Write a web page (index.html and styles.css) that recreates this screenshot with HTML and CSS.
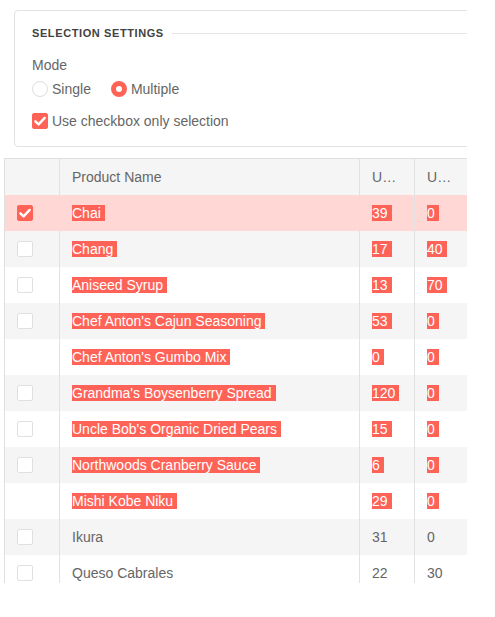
FILE: index.html
```html
<!DOCTYPE html>
<html>
<head>
<meta charset="utf-8">
<link rel="stylesheet" href="styles.css">
</head>
<body>
<div class="clip">
  <div class="settings">
    <div class="legend"><span class="legend-text">Selection Settings</span><span class="legend-line"></span></div>
    <div class="label">Mode</div>
    <div class="radios">
      <label class="opt"><span class="radio"></span>Single</label>
      <label class="opt"><span class="radio on"></span>Multiple</label>
    </div>
    <label class="opt check-row"><span class="cb on"><svg viewBox="0 0 16 16" width="16" height="16"><path d="M3.4 8.3 L6.6 11.4 L12.7 4.9" fill="none" stroke="#fff" stroke-width="2.4" stroke-linecap="round" stroke-linejoin="round"/></svg></span>Use checkbox only selection</label>
  </div>

  <div class="grid">
    <div class="row head">
      <div class="cell c1"></div>
      <div class="cell">Product Name</div>
      <div class="cell">Units In Stock</div>
      <div class="cell last">Units On Order</div>
    </div>
    <div class="row sel">
      <div class="cell c1"><span class="cb on"><svg viewBox="0 0 16 16" width="16" height="16"><path d="M3.4 8.3 L6.6 11.4 L12.7 4.9" fill="none" stroke="#fff" stroke-width="2.4" stroke-linecap="round" stroke-linejoin="round"/></svg></span></div>
      <div class="cell"><span class="hl">Chai</span></div>
      <div class="cell"><span class="hl">39</span></div>
      <div class="cell last"><span class="hl">0</span></div>
    </div>
    <div class="row alt">
      <div class="cell c1"><span class="cb"></span></div>
      <div class="cell"><span class="hl">Chang</span></div>
      <div class="cell"><span class="hl">17</span></div>
      <div class="cell last"><span class="hl">40</span></div>
    </div>
    <div class="row">
      <div class="cell c1"><span class="cb"></span></div>
      <div class="cell"><span class="hl">Aniseed Syrup</span></div>
      <div class="cell"><span class="hl">13</span></div>
      <div class="cell last"><span class="hl">70</span></div>
    </div>
    <div class="row alt">
      <div class="cell c1"><span class="cb"></span></div>
      <div class="cell"><span class="hl">Chef Anton's Cajun Seasoning</span></div>
      <div class="cell"><span class="hl">53</span></div>
      <div class="cell last"><span class="hl">0</span></div>
    </div>
    <div class="row">
      <div class="cell c1"></div>
      <div class="cell"><span class="hl">Chef Anton's Gumbo Mix</span></div>
      <div class="cell"><span class="hl">0</span></div>
      <div class="cell last"><span class="hl">0</span></div>
    </div>
    <div class="row alt">
      <div class="cell c1"><span class="cb"></span></div>
      <div class="cell"><span class="hl">Grandma's Boysenberry Spread</span></div>
      <div class="cell"><span class="hl">120</span></div>
      <div class="cell last"><span class="hl">0</span></div>
    </div>
    <div class="row">
      <div class="cell c1"><span class="cb"></span></div>
      <div class="cell"><span class="hl">Uncle Bob's Organic Dried Pears</span></div>
      <div class="cell"><span class="hl">15</span></div>
      <div class="cell last"><span class="hl">0</span></div>
    </div>
    <div class="row alt">
      <div class="cell c1"><span class="cb"></span></div>
      <div class="cell"><span class="hl">Northwoods Cranberry Sauce</span></div>
      <div class="cell"><span class="hl">6</span></div>
      <div class="cell last"><span class="hl">0</span></div>
    </div>
    <div class="row">
      <div class="cell c1"></div>
      <div class="cell"><span class="hl">Mishi Kobe Niku</span></div>
      <div class="cell"><span class="hl">29</span></div>
      <div class="cell last"><span class="hl">0</span></div>
    </div>
    <div class="row alt">
      <div class="cell c1"><span class="cb"></span></div>
      <div class="cell">Ikura</div>
      <div class="cell">31</div>
      <div class="cell last">0</div>
    </div>
    <div class="row">
      <div class="cell c1"><span class="cb"></span></div>
      <div class="cell">Queso Cabrales</div>
      <div class="cell">22</div>
      <div class="cell last">30</div>
    </div>
  </div>
</div>
</body>
</html>
```

FILE: styles.css
```css
html, body {
  margin: 0;
  padding: 0;
  background: #ffffff;
}
body {
  font-family: "Liberation Sans", Arial, sans-serif;
  font-size: 14px;
  color: #666666;
  padding-top: 10px;
}
.clip {
  width: 463px;
  margin-left: 4px;
  overflow: hidden;
}
.settings {
  margin-left: 10px;
  width: 480px;
  border: 1px solid #e2e2e2;
  border-radius: 4px;
  padding: 14px 17px 15px 17px;
  box-sizing: border-box;
}
.legend {
  display: flex;
  align-items: center;
  gap: 8px;
  height: 16px;
}
.legend-text {
  font-size: 11px;
  font-weight: bold;
  text-transform: uppercase;
  letter-spacing: 0.6px;
  color: #424242;
  white-space: nowrap;
}
.legend-line {
  flex: 1;
  height: 1px;
  background: #e6e6e6;
}
.label {
  margin-top: 14px;
  line-height: 20px;
}
.radios {
  margin-top: 4px;
  display: flex;
  gap: 20px;
  height: 20px;
}
.opt {
  display: flex;
  align-items: center;
  gap: 4px;
  line-height: 20px;
  height: 20px;
}
.check-row {
  margin-top: 12px;
}
.radio {
  width: 16px;
  height: 16px;
  box-sizing: border-box;
  border: 1px solid #dedede;
  border-radius: 50%;
  background: #fff;
}
.radio.on {
  border: 5px solid #ff6358;
}
.cb {
  display: block;
  width: 16px;
  height: 16px;
  box-sizing: border-box;
  border: 1px solid #e0e0e0;
  border-radius: 2px;
  background: #fff;
}
.cb svg {
  display: block;
  margin: -1px;
}
.cb.on {
  background: #ff6358;
  border-color: #ff6358;
}
.grid {
  margin-top: 11px;
  height: 425px;
  box-sizing: border-box;
  border-top: 1px solid #e0e0e0;
  border-left: 1px solid #e0e0e0;
  overflow: hidden;
}
.row {
  display: grid;
  grid-template-columns: 55px 300px 55px 52px;
  height: 36px;
  background: #ffffff;
}
.row.head, .row.alt {
  background: #f5f5f5;
}
.row.sel {
  background: #ffd8d5;
}
.cell {
  box-sizing: border-box;
  border-right: 1px solid #e2e2e2;
  padding: 1px 12px 0 12px;
  line-height: 35px;
  white-space: nowrap;
  overflow: hidden;
  text-overflow: ellipsis;
}
.row.head .cell {
  padding-top: 0;
  line-height: 36px;
}
.cell.last {
  border-right: none;
}
.cell.c1 {
  display: flex;
  align-items: center;
  padding-top: 0;
}
.hl {
  background: #ff6358;
  color: #ffffff;
  padding-right: 4px;
}
```
